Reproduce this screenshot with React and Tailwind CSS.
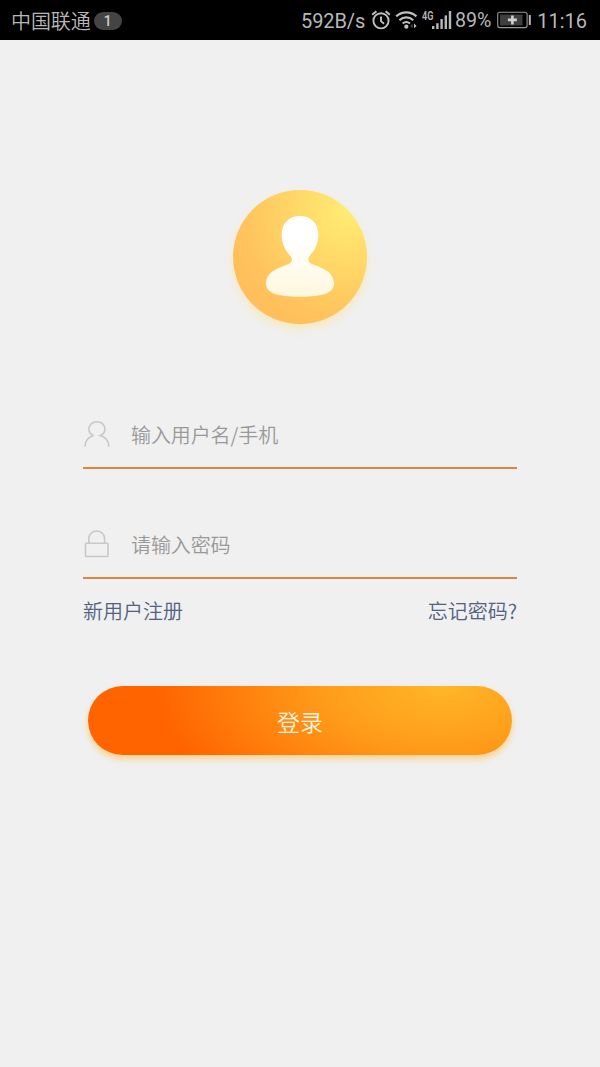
// src/pages/LoginPage.jsx
import { useState } from "react";

const SignalIcons = () => (
  <>
    {/* Alarm */}
    <svg className="ml-[6px] h-5 w-5" viewBox="0 0 20 20" fill="none" stroke="#c0c0c0">
      <circle cx="10" cy="10.8" r="7.6" strokeWidth="1.9" />
      <path d="M10 6.5v4.6l3 2.6" strokeWidth="1.9" />
      <path d="M1.2 4.8l4.200-3.500M18.800 4.800l-4.200-3.500" strokeWidth="2" />
    </svg>
    {/* Wifi */}
    <svg className="ml-1 h-5 w-[23px]" viewBox="0 0 23 20" fill="none" stroke="#c0c0c0">
      <path d="M1.200 6.400c5.800-5.300 14.400-5.300 20.200 0" strokeWidth="2.200" />
      <path d="M4.400 10.200c4.100-3.700 9.700-3.700 13.800 0" strokeWidth="2.200" />
      <path d="M7.600 13.600c2.300-2 5.100-2 7.400 0" strokeWidth="2" />
      <circle cx="11.300" cy="16.700" r="2.100" fill="#c0c0c0" stroke="none" />
      <path d="M17.600 13.600v4.600l-2.400-2.300z" fill="#444" stroke="none" />
      <path d="M19 13.600v4.600l2.600-2.300z" fill="#c0c0c0" stroke="none" />
    </svg>
    <span className="ml-[4px] -mt-[9px] w-[10px] origin-left scale-x-[0.76] font-['Roboto',sans-serif] text-[12px] font-semibold leading-none">
      4G
    </span>
    {/* Mobile signal */}
    <svg className="h-5 w-5" viewBox="0 0 20 20" fill="#b8b8b8">
      <rect x="0" y="16" width="2.400" height="3" />
      <rect x="4.200" y="13.200" width="2.400" height="5.800" />
      <rect x="8.400" y="9" width="2.400" height="10" />
      <rect x="12.600" y="5.400" width="2.400" height="13.600" />
      <rect x="16.800" y="1" width="2.400" height="18" />
    </svg>
  </>
);

const StatusBar = () => (
  <div className="flex h-10 items-center bg-black pl-[11px] pr-[13px] text-[#b8b8b8]">
    <span className="mt-0.5 text-[20px] font-[350] leading-none tracking-[-0.1px]">中国联通</span>
    <span className="ml-[3px] mt-px flex h-[18px] w-7 items-center justify-center rounded-full bg-[#444] font-['Roboto',sans-serif] text-[14px] font-medium leading-none text-[#ccc]">
      1
    </span>
    <div className="ml-auto flex items-center font-['Roboto',sans-serif] text-[20px] leading-none">
      <span className="mt-0.5 tracking-[-0.1px]">592B/s</span>
      <SignalIcons />
      <span className="ml-[3px] w-[37px] origin-left scale-x-[0.98]">89%</span>
      {/* Battery */}
      <svg className="ml-[5px] h-[18px] w-[34px]" viewBox="0 0 34 18" fill="none">
        <rect x="0.700" y="1.200" width="29.400" height="15.400" rx="2" stroke="#999" strokeWidth="1.100" />
        <rect x="3" y="3.500" width="22.500" height="11" fill="#3e3e3e" />
        <path d="M15.400 4.400v9M10.900 8.900h9" stroke="#d0d0d0" strokeWidth="2.600" />
        <rect x="31.800" y="4" width="2" height="10" fill="#b8b8b8" />
      </svg>
      <span className="ml-[6px] mt-0.5">11:16</span>
    </div>
  </div>
);

const Avatar = () => (
  <div className="mx-auto mt-[150px] h-[134px] w-[134px] rounded-full bg-[radial-gradient(circle_at_86%_16%,#ffec74_0%,#ffd767_35%,#ffc35d_65%,#ffb95a_100%)] shadow-[0_5px_8px_rgba(255,226,130,0.45)]">
    <svg className="h-full w-full" viewBox="0 0 134 134">
      <defs>
        <linearGradient id="person" x1="0" y1="0" x2="0" y2="1">
          <stop offset="0.3" stopColor="#ffffff" />
          <stop offset="1" stopColor="#fff7dd" />
        </linearGradient>
      </defs>
      <path
        fill="url(#person)"
        d="M67 26C56 26 48.600 33.500 48.600 44.500C48.600 54 52.500 60.500 57 65.500C60 69 59.500 72 55.500 74C48 77.500 33 80.500 33 93.500C33 103 44 106.700 67 106.700C90 106.700 101 103 101 93.500C101 80.500 86.500 77.500 79 74C75 72 74 69 77 65.500C81.500 60.500 85.400 54 85.400 44.500C85.400 33.500 78 26 67 26Z"
      />
    </svg>
  </div>
);

const UserIcon = () => (
  <svg className="h-7 w-7 shrink-0" viewBox="0 0 28 28" fill="none" stroke="#c8c8c8" strokeWidth="1.6">
    <path d="M10.600 15.600C7.600 14.400 5.900 12.200 5.900 9.300C5.900 5 9.300 1.800 13.900 1.800C18.500 1.800 21.900 5 21.900 9.300C21.900 12.200 20.200 14.400 17.200 15.600C22.300 17 25.500 21 25.900 26.600M10.600 15.600C5.500 17 2.300 21 1.900 26.600" />
  </svg>
);

const LockIcon = () => (
  <svg className="h-7 w-7 shrink-0" viewBox="0 0 28 28" fill="none" stroke="#c8c8c8" strokeWidth="1.6">
    <rect x="2.500" y="13.200" width="22.500" height="13.300" rx="0.800" />
    <path d="M5.800 13.200V8.900C5.800 4.400 9.200 1 13.700 1C18.200 1 21.600 4.400 21.600 8.900V13.200" />
  </svg>
);

const Field = ({ icon, ...props }) => (
  <label className="flex h-[60px] items-center border-b-2 border-[#df8440] pb-2">
    {icon}
    <input
      className="ml-5 mt-[2px] min-w-0 flex-1 bg-transparent text-[20px] font-[350] leading-7 tracking-[-0.1px] text-gray-700 outline-none placeholder:text-[#999]"
      {...props}
    />
  </label>
);

export default function App() {
  const [username, setUsername] = useState("");
  const [password, setPassword] = useState("");

  return (
    <div className="min-h-[1067px] bg-[#f0f0f0] font-['Noto_Sans_CJK_SC',sans-serif]">
      <StatusBar />
      <Avatar />

      <form className="mx-auto mt-[85px] w-[434px]" onSubmit={(e) => e.preventDefault()}>
        <Field
          icon={<UserIcon />}
          type="text"
          placeholder="输入用户名/手机"
          value={username}
          onChange={(e) => setUsername(e.target.value)}
        />
        <div className="mt-[50px]">
          <Field
            icon={<LockIcon />}
            type="password"
            placeholder="请输入密码"
            value={password}
            onChange={(e) => setPassword(e.target.value)}
          />
        </div>

        <div className="mt-[17px] flex justify-between text-[20px] font-[350] leading-[30px] text-[#52617d]">
          <a href="#register">新用户注册</a>
          <a href="#forgot">忘记密码?</a>
        </div>

        <button
          type="submit"
          className="mx-auto mt-[60px] block h-[69px] w-[424px] rounded-full bg-[radial-gradient(285px_145px_at_354px_0px,#ffb627_0%,#ff9c1a_42%,#ff6400_100%)] pt-0.5 text-[23px] font-[350] text-[#fff3e0] shadow-[0_4px_6px_rgba(255,190,70,0.6)]"
        >
          登录
        </button>
      </form>
    </div>
  );
}
